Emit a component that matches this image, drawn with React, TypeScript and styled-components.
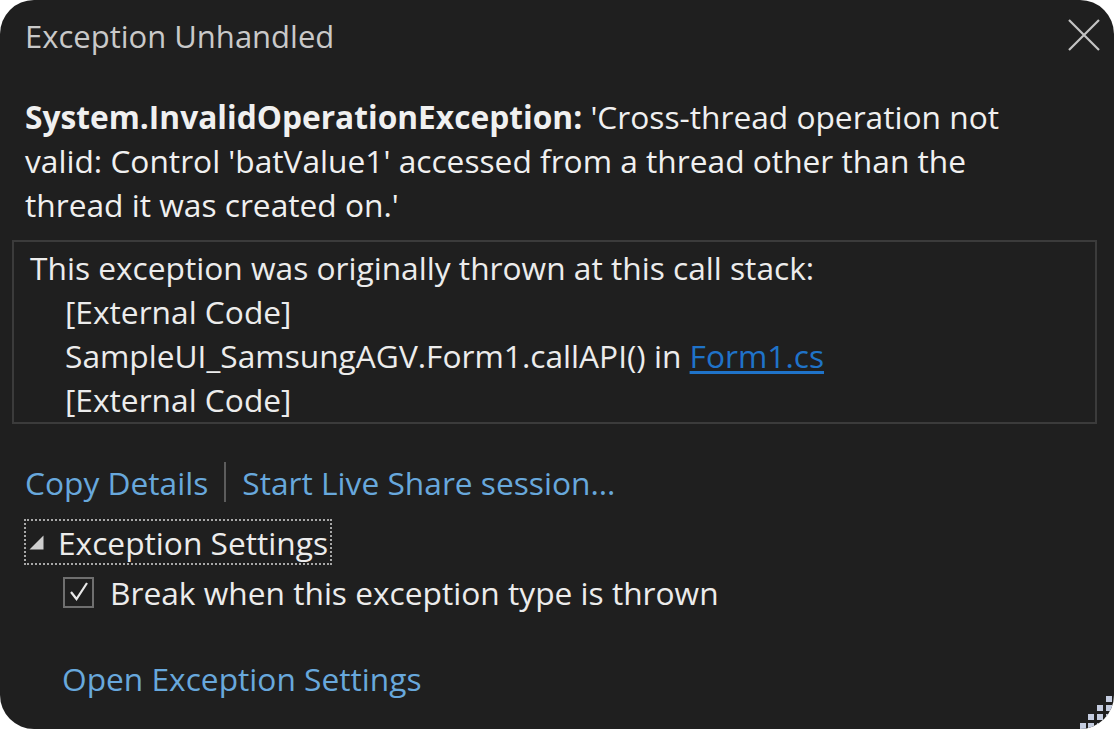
import React from 'react';
import styled, { createGlobalStyle } from 'styled-components';

const GlobalStyle = createGlobalStyle`
  html, body {
    margin: 0;
    padding: 0;
    background: #ffffff;
  }
  body {
    font-family: 'Open Sans', 'Noto Sans', sans-serif;
  }
`;

const Panel = styled.div`
  position: relative;
  width: 1114px;
  height: 729px;
  box-sizing: border-box;
  padding: 0 17px 0 25px;
  background-color: #1f1f1f;
  border-radius: 34px;
  overflow: hidden;
  color: #ececec;
  font-size: 31.7px;
`;

const Header = styled.div`
  display: flex;
  justify-content: space-between;
  align-items: center;
  height: 72px;
`;

const Title = styled.h1`
  margin: 0;
  font-size: 31px;
  font-weight: 400;
  color: #c9c9c9;
`;

const CloseButton = styled.button`
  width: 36px;
  height: 36px;
  margin-right: -5px;
  margin-top: -2px;
  padding: 0;
  border: none;
  background: transparent;
  cursor: pointer;
  display: flex;
  align-items: center;
  justify-content: center;
`;

const Message = styled.p`
  margin: 23px 0 0 0;
  max-width: 1030px;
  line-height: 44px;
  color: #f0f0f0;
`;

const Strong = styled.strong`
  font-weight: 700;
`;

const StackBox = styled.div`
  margin: 13px 0 0 -13px;
  padding: 4px 16px 0 16px;
  height: 184px;
  box-sizing: border-box;
  border: 2px solid #3b3b3b;
  line-height: 44px;
`;

const StackLine = styled.div<{ $indent?: boolean }>`
  padding-left: ${(p) => (p.$indent ? '35px' : '0')};
  white-space: nowrap;
`;

const FileLink = styled.a`
  color: #1f73c9;
  text-decoration: underline;
  text-underline-offset: 3px;
  cursor: pointer;
`;

const LinkRow = styled.div`
  display: flex;
  align-items: center;
  gap: 16px;
  margin-top: 36px;
  height: 44px;
`;

const ActionLink = styled.a`
  color: #68a8dc;
  cursor: pointer;
  white-space: nowrap;
`;

const Separator = styled.span`
  width: 2px;
  height: 40px;
  background-color: #5c5c5c;
`;

const SettingsToggle = styled.div`
  display: inline-flex;
  align-items: center;
  gap: 14px;
  margin: 15px 0 0 -1px;
  height: 46px;
  box-sizing: border-box;
  padding: 0 2px 0 3px;
  border: 2px dotted #a8a8a8;
`;

const CheckRow = styled.label`
  display: flex;
  align-items: center;
  gap: 16px;
  margin: 5px 0 0 38px;
  height: 44px;
`;

const CheckBox = styled.span`
  width: 31px;
  height: 31px;
  box-sizing: border-box;
  border: 2px solid #6f6f6f;
  display: flex;
  align-items: center;
  justify-content: center;
`;

const BottomLink = styled(ActionLink)`
  display: block;
  margin: 43px 0 0 37px;
  line-height: 44px;
`;

const Grip = styled.svg`
  position: absolute;
  right: 0;
  bottom: 0;
`;

const App: React.FC = () => {
  const dots: Array<[number, number]> = [
    [26, 0],
    [17, 9], [26, 9],
    [8, 18], [17, 18], [26, 18],
    [0, 27], [8, 27], [17, 27],
  ];

  return (
    <>
      <GlobalStyle />
      <Panel>
        <Header>
          <Title>Exception Unhandled</Title>
          <CloseButton aria-label="Close">
            <svg width="34" height="34" viewBox="0 0 34 34">
              <path d="M2 2 L32 32 M32 2 L2 32" stroke="#c4c4c4" strokeWidth="2.2" fill="none" />
            </svg>
          </CloseButton>
        </Header>

        <Message>
          <Strong>System.InvalidOperationException:</Strong> 'Cross-thread operation not
          valid: Control 'batValue1' accessed from a thread other than the thread it was
          created on.'
        </Message>

        <StackBox>
          <StackLine>This exception was originally thrown at this call stack:</StackLine>
          <StackLine $indent>[External Code]</StackLine>
          <StackLine $indent>
            SampleUI_SamsungAGV.Form1.callAPI() in <FileLink>Form1.cs</FileLink>
          </StackLine>
          <StackLine $indent>[External Code]</StackLine>
        </StackBox>

        <LinkRow>
          <ActionLink>Copy Details</ActionLink>
          <Separator />
          <ActionLink>Start Live Share session...</ActionLink>
        </LinkRow>

        <SettingsToggle>
          <svg width="15" height="15" viewBox="0 0 15 15">
            <path d="M14.5 0.5 L14.5 14.5 L0.5 14.5 Z" fill="#cfcfcf" />
          </svg>
          <span>Exception Settings</span>
        </SettingsToggle>

        <CheckRow>
          <CheckBox>
            <svg width="22" height="22" viewBox="0 0 22 22">
              <path d="M3 11 L8.5 18 L19 2" stroke="#e8e8e8" strokeWidth="2.2" fill="none" />
            </svg>
          </CheckBox>
          <span>Break when this exception type is thrown</span>
        </CheckRow>

        <BottomLink>Open Exception Settings</BottomLink>

        <Grip width="34" height="34" viewBox="0 0 34 34">
          {dots.map(([x, y]) => (
            <rect key={`${x}-${y}`} x={x} y={y + 1} width="6" height="6" fill="#c5cde0" />
          ))}
        </Grip>
      </Panel>
    </>
  );
};

export default App;
